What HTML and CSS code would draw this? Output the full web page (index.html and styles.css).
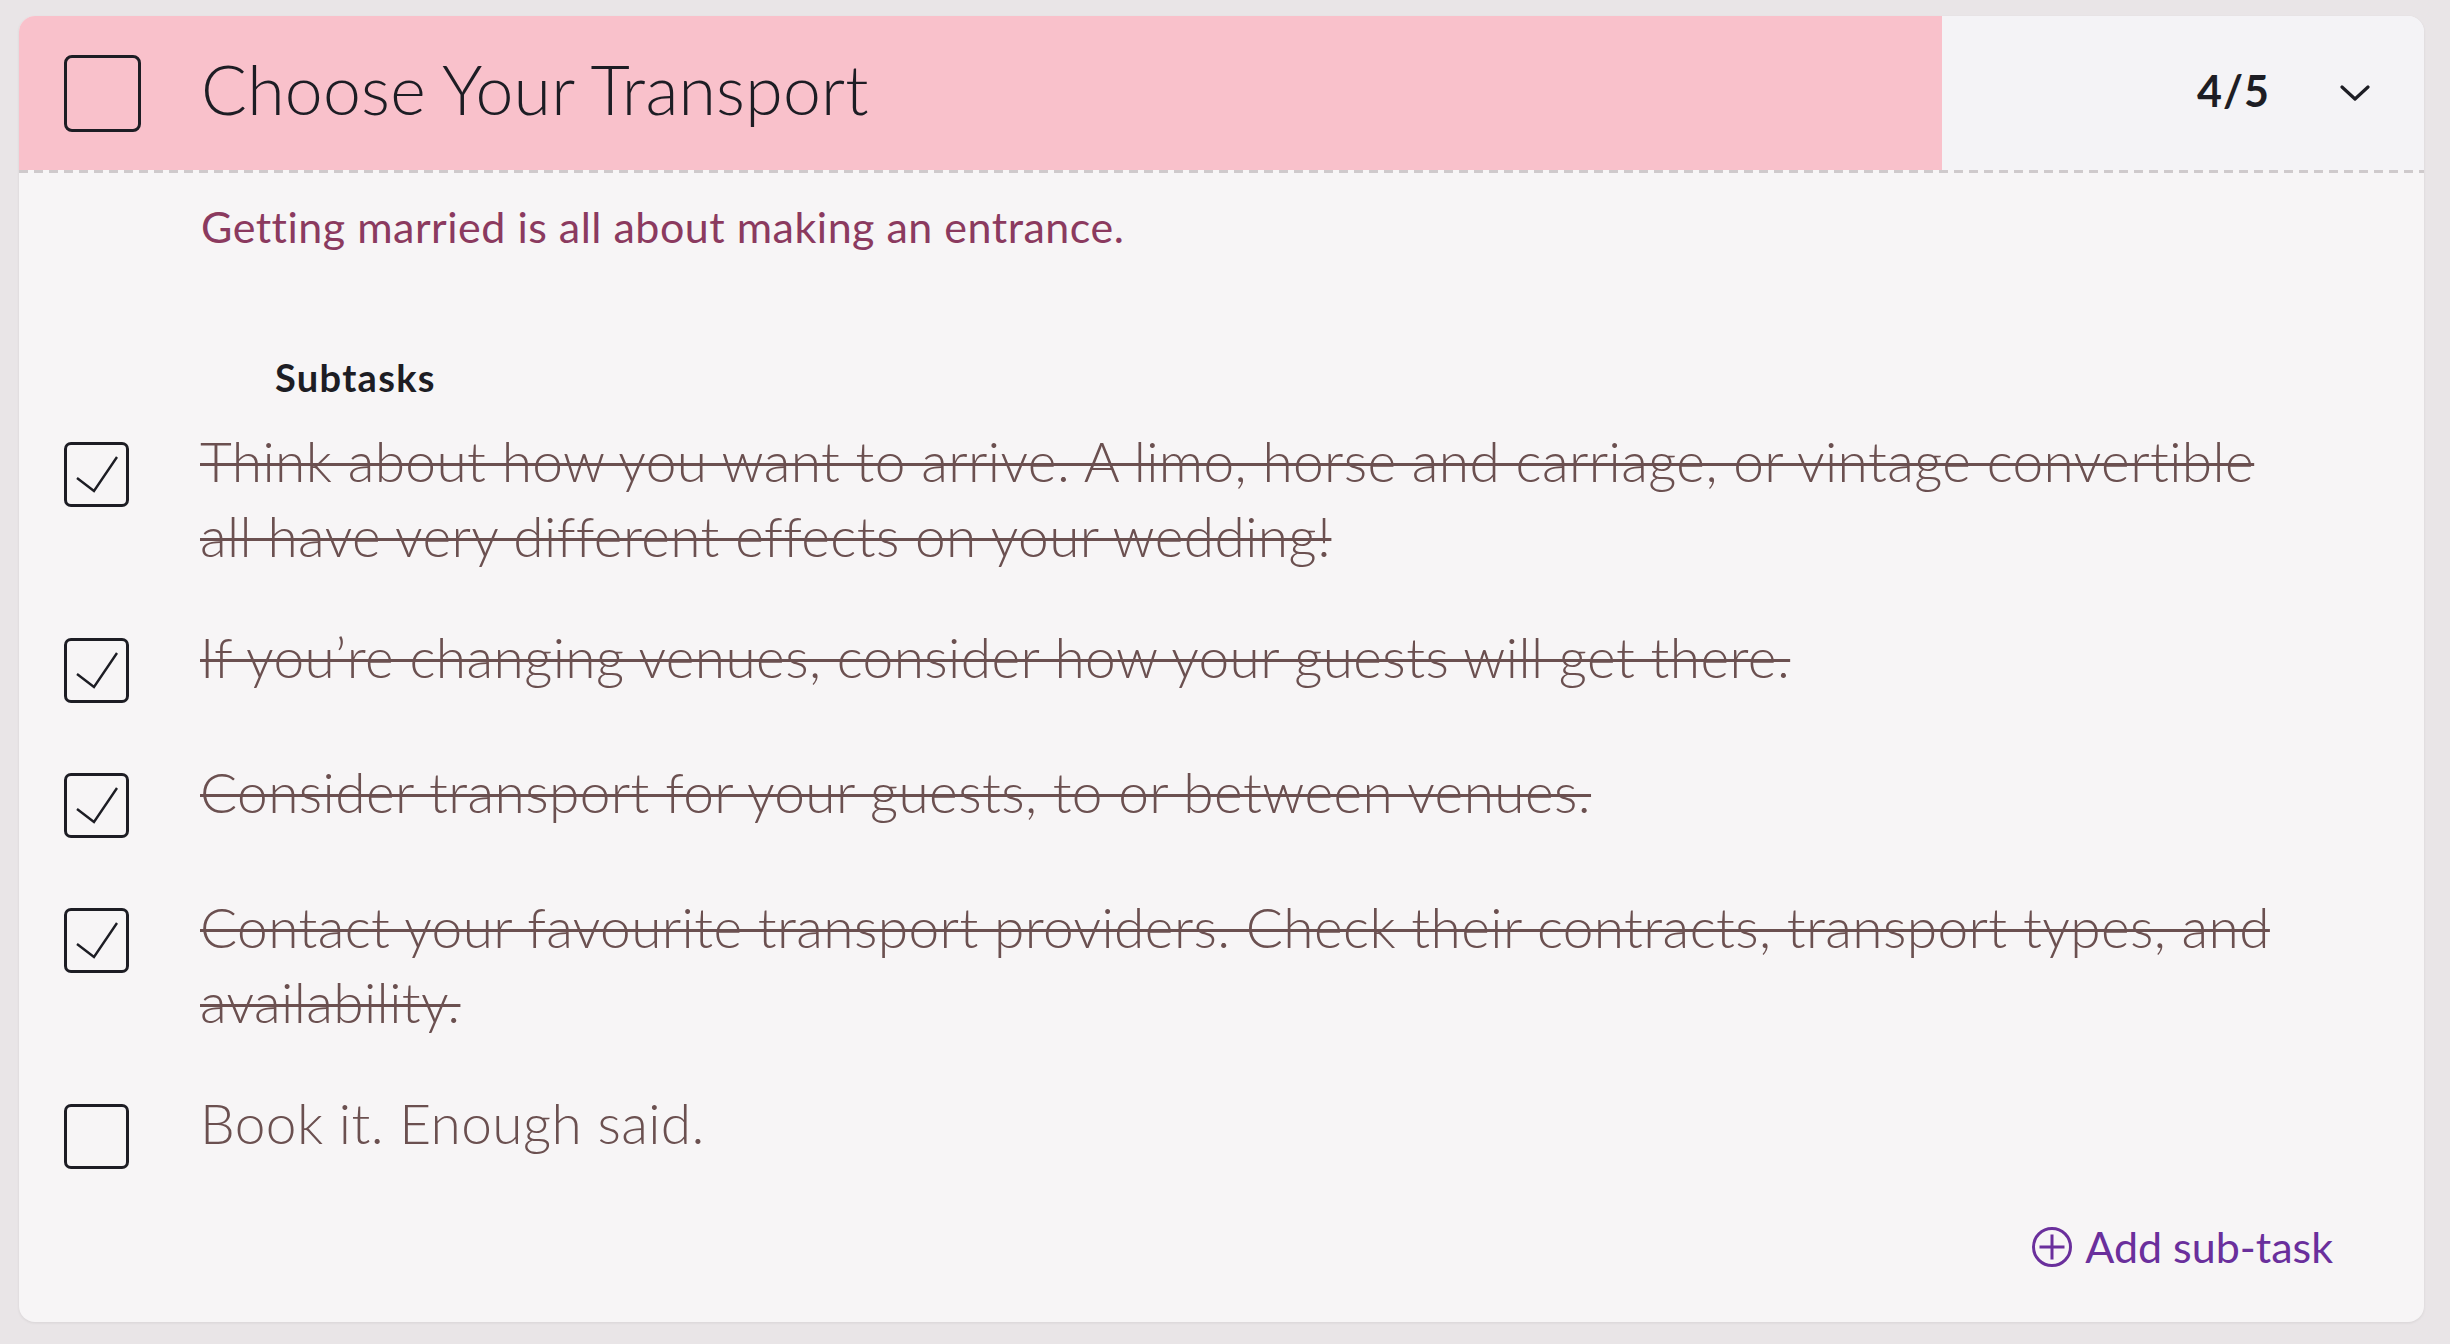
FILE: index.html
```html
<!DOCTYPE html>
<html lang="en">
<head>
    <meta charset="UTF-8">
    <meta name="viewport" content="width=device-width, initial-scale=1.0">
    <title>Choose Your Transport</title>
    <link rel="stylesheet" href="styles.css">
</head>
<body>
    <div class="task-card">
        <!-- Task header -->
        <div class="task-head">
            <div class="task-main">
                <span class="box box-lg"></span>
                <h1 class="task-title">Choose Your Transport</h1>
            </div>
            <div class="task-meta">
                <span class="task-count">4/5</span>
                <svg class="chevron" viewBox="0 0 30 16" width="30" height="16">
                    <path d="M2 2 L15 14 L28 2" fill="none" stroke="#1d1d24" stroke-width="3.2" stroke-linecap="round" stroke-linejoin="round"/>
                </svg>
            </div>
        </div>

        <!-- Task body -->
        <div class="task-body">
            <p class="task-desc">Getting married is all about making an entrance.</p>
            <h2 class="subtasks-label">Subtasks</h2>
            <ul class="subtasks">
                <li class="subtask done">
                    <span class="box"><svg viewBox="0 0 59 59"><path d="M10 33 L27 46 L50 12"/></svg></span>
                    <span class="subtask-text">Think about how you want to arrive. A limo, horse and carriage, or vintage convertible all have very different effects on your wedding!</span>
                </li>
                <li class="subtask done">
                    <span class="box"><svg viewBox="0 0 59 59"><path d="M10 33 L27 46 L50 12"/></svg></span>
                    <span class="subtask-text">If you’re changing venues, consider how your guests will get there.</span>
                </li>
                <li class="subtask done">
                    <span class="box"><svg viewBox="0 0 59 59"><path d="M10 33 L27 46 L50 12"/></svg></span>
                    <span class="subtask-text">Consider transport for your guests, to or between venues.</span>
                </li>
                <li class="subtask done">
                    <span class="box"><svg viewBox="0 0 59 59"><path d="M10 33 L27 46 L50 12"/></svg></span>
                    <span class="subtask-text">Contact your favourite transport providers. Check their contracts, transport types, and availability.</span>
                </li>
                <li class="subtask">
                    <span class="box"></span>
                    <span class="subtask-text">Book it. Enough said.</span>
                </li>
            </ul>
            <div class="add-row">
                <button class="add-btn" type="button">
                    <svg viewBox="0 0 42 42" width="42" height="42">
                        <circle cx="21" cy="21" r="18.5" fill="none" stroke="#6a2f9c" stroke-width="3"/>
                        <path d="M8.5 21 H33.5 M21 8.5 V33.5" stroke="#6a2f9c" stroke-width="3"/>
                    </svg>
                    Add sub-task
                </button>
            </div>
        </div>
    </div>
</body>
</html>
```

FILE: styles.css
```css
body {
    margin: 0;
    padding: 16px 26px 22px 19px;
    background-color: #e9e5e7;
    font-family: Lato, "Open Sans", sans-serif;
    color: #1d1d24;
}

.task-card {
    background: #f7f5f6;
    border-radius: 16px;
    overflow: hidden;
    box-shadow: 0 1px 3px rgba(0, 0, 0, 0.08);
    height: 1306px;
}

/* Header */
.task-head {
    display: flex;
    height: 154px;
    padding-bottom: 3px;
    background: repeating-linear-gradient(90deg, #cfcacc 0 9px, transparent 9px 15px) left bottom / 100% 3px no-repeat;
}

.task-main {
    width: 1923px;
    display: flex;
    align-items: center;
    padding-left: 45px;
    box-sizing: border-box;
    background: #f9c1cb;
}

.task-title {
    margin: 0 0 8px 60px;
    font-size: 68px;
    font-weight: 300;
    line-height: 1;
    letter-spacing: 0.2px;
}

.task-meta {
    flex: 1;
    display: flex;
    align-items: center;
    justify-content: flex-end;
    gap: 70px;
    padding-right: 54px;
    background: #f4f3f6;
}

.task-count {
    margin-bottom: 5px;
    font-size: 43px;
    font-weight: 700;
    letter-spacing: 1px;
}

.chevron {
    display: block;
}

/* Checkboxes */
.box {
    flex: none;
    display: block;
    width: 65px;
    height: 65px;
    border: 3px solid #1d1d24;
    border-radius: 7px;
    box-sizing: border-box;
}

.box-lg {
    width: 77px;
    height: 77px;
    border-radius: 8px;
}

.box svg {
    display: block;
    width: 100%;
    height: 100%;
}

.box path {
    fill: none;
    stroke: #1d1d24;
    stroke-width: 2.4;
}

/* Body */
.task-body {
    padding: 29px 91px 0 45px;
}

.task-desc {
    margin: 0 0 0 137px;
    font-size: 43px;
    line-height: 50px;
    letter-spacing: 0.5px;
    color: #8b3a5f;
}

.subtasks-label {
    margin: 103px 0 0 211px;
    font-size: 38px;
    line-height: 44px;
    font-weight: 700;
    letter-spacing: 1.3px;
}

.subtasks {
    list-style: none;
    margin: 25px 0 0;
    padding: 0;
    display: flex;
    flex-direction: column;
    gap: 46px;
}

.subtask {
    display: flex;
    align-items: flex-start;
}

.subtask .box {
    margin: 18px 71px 6px 0;
}

.subtask-text {
    max-width: 2090px;
    font-size: 55px;
    line-height: 75px;
    font-weight: 300;
    letter-spacing: 0.4px;
    color: #6b5050;
}

.subtask.done .subtask-text {
    text-decoration: line-through;
    text-decoration-thickness: 3px;
}

/* Add sub-task */
.add-row {
    display: flex;
    justify-content: flex-end;
    margin-top: 47px;
}

.add-btn {
    display: flex;
    align-items: center;
    gap: 12px;
    padding: 0;
    border: none;
    background: none;
    font-family: inherit;
    font-size: 43px;
    line-height: 50px;
    color: #6a2f9c;
    cursor: pointer;
}

.add-btn svg {
    display: block;
}
```
